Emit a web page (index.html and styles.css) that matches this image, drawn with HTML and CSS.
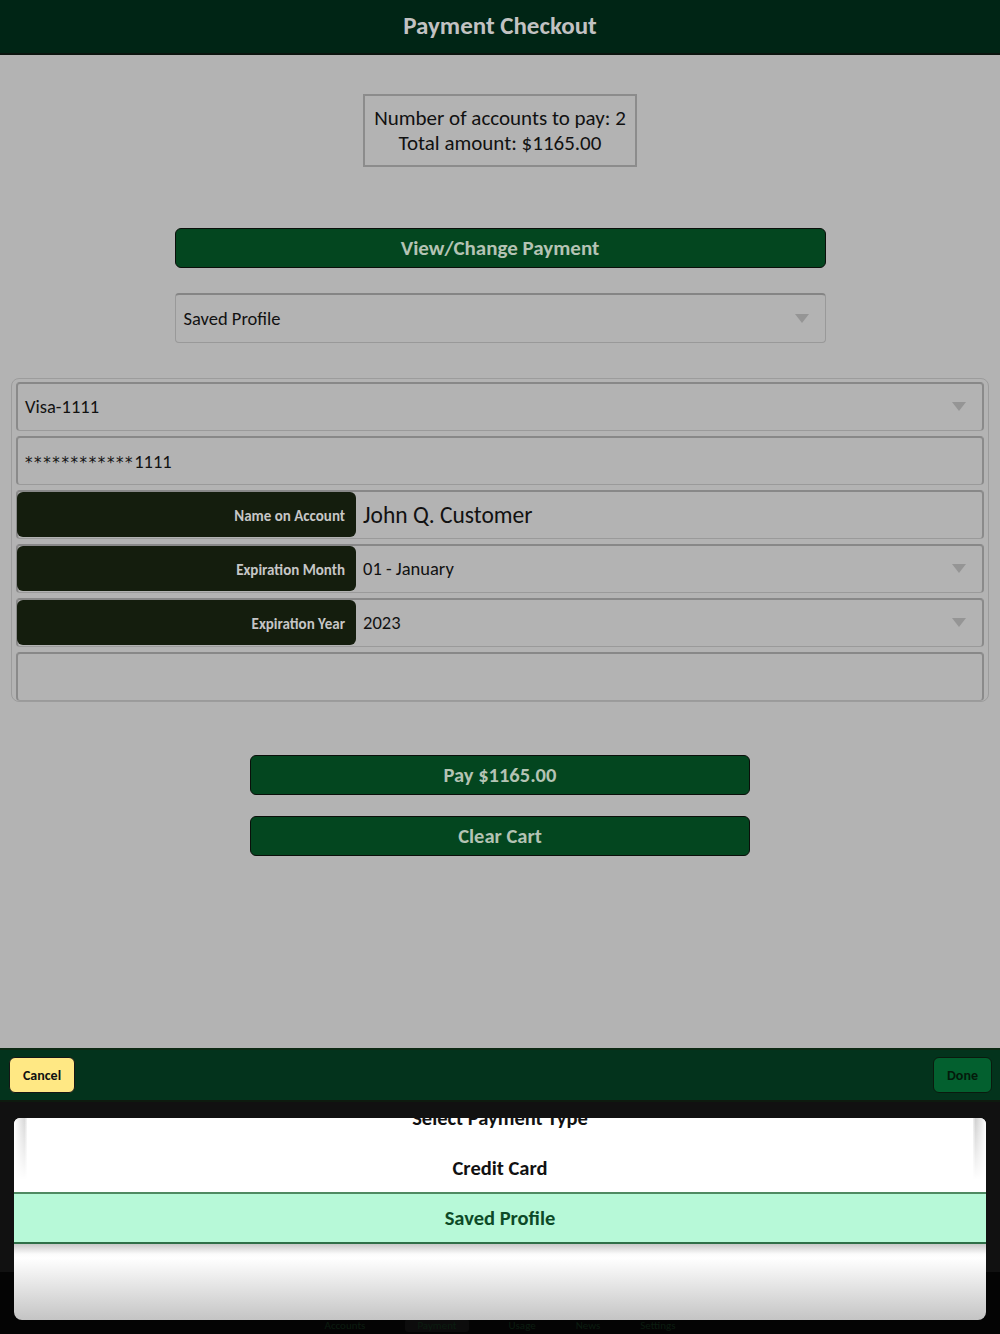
FILE: index.html
```html
<!DOCTYPE html>
<html lang="en">
<head>
  <meta charset="UTF-8" />
  <meta name="viewport" content="width=device-width, initial-scale=1.0"/>
  <title>Payment Checkout</title>
  <link rel="stylesheet" href="styles.css">
</head>
<body>
  <div class="screen">
    <header class="topbar">Payment Checkout</header>

    <main class="content">
      <div class="summary">
        <div>Number of accounts to pay: 2</div>
        <div>Total amount: $1165.00</div>
      </div>

      <button class="green-btn wide">View/Change Payment</button>

      <div class="select wide">
        <span>Saved Profile</span>
        <span class="caret"></span>
      </div>

      <div class="panel">
        <div class="row">
          <span class="value">Visa-1111</span>
          <span class="caret"></span>
        </div>
        <div class="row">
          <span class="value mask">************<span class="digits">1111</span></span>
        </div>
        <div class="row">
          <div class="label">Name on Account</div>
          <span class="value big">John Q. Customer</span>
        </div>
        <div class="row">
          <div class="label">Expiration Month</div>
          <span class="value">01 - January</span>
          <span class="caret"></span>
        </div>
        <div class="row">
          <div class="label">Expiration Year</div>
          <span class="value">2023</span>
          <span class="caret"></span>
        </div>
        <div class="row"></div>
      </div>

      <button class="green-btn pay">Pay $1165.00</button>
      <button class="green-btn pay second">Clear Cart</button>
    </main>

    <div class="toolbar">
      <button class="cancel">Cancel</button>
      <button class="done">Done</button>
    </div>

    <div class="picker-zone">
      <div class="tabs">
        <span>Accounts</span>
        <span class="on">Payment</span>
        <span>Usage</span>
        <span>News</span>
        <span>Settings</span>
      </div>
      <div class="picker">
        <div class="picker-top">
          <span class="shade left"></span>
          <div class="picker-title">Select Payment Type</div>
          <div class="picker-item">Credit Card</div>
          <span class="shade right"></span>
        </div>
        <div class="picker-item selected">Saved Profile</div>
        <div class="picker-bottom"></div>
      </div>
    </div>
  </div>
</body>
</html>
```

FILE: styles.css
```css
* {
  box-sizing: border-box;
}

body {
  margin: 0;
  font-family: Carlito, Lato, 'Open Sans', sans-serif;
  background: #000;
}

.screen {
  width: 1000px;
  height: 1334px;
  display: flex;
  flex-direction: column;
  overflow: hidden;
}

.topbar {
  height: 55px;
  background: #002515;
  border-bottom: 2px solid #0b140e;
  color: #c2c2c2;
  font-size: 25px;
  font-weight: bold;
  display: flex;
  align-items: center;
  justify-content: center;
  padding-bottom: 2px;
}

.content {
  height: 993px;
  background: #b3b3b3;
  display: flex;
  flex-direction: column;
  align-items: center;
  color: #111;
}

.summary {
  margin-top: 39px;
  width: 274px;
  height: 73px;
  border: 2px solid #8c8c8c;
  display: flex;
  flex-direction: column;
  justify-content: center;
  align-items: center;
  font-size: 21px;
  line-height: 25px;
}

.green-btn {
  display: block;
  background: #03461f;
  border: 1.5px solid #0a0f0a;
  border-radius: 6px;
  color: #b4c3b4;
  font-family: inherit;
  font-size: 20.5px;
  font-weight: bold;
  height: 40px;
  padding: 0;
}

.wide {
  width: 651px;
}

.green-btn.wide {
  margin-top: 61px;
  font-size: 21px;
}

.select {
  margin-top: 25px;
  height: 50px;
  border: 1px solid #999;
  border-top: 2px solid #858585;
  border-radius: 4px;
  display: flex;
  align-items: center;
  padding: 0 16px 0 8px;
  font-size: 18.5px;
}

.select span:first-child {
  flex: 1;
}

.caret {
  width: 0;
  height: 0;
  border-left: 7px solid transparent;
  border-right: 7px solid transparent;
  border-top: 9px solid #959595;
}

.panel {
  align-self: stretch;
  margin: 35px 11px 0;
  height: 324px;
  border: 1.5px solid #9c9c9c;
  border-radius: 8px;
  padding: 2.5px 4px 0 4px;
  display: flex;
  flex-direction: column;
  gap: 5px;
}

.row {
  height: 49px;
  flex-shrink: 0;
  border: 1px solid #9a9a9a;
  border-top: 2px solid #888;
  border-left: 2px solid #8a8a8a;
  border-right: 2px solid #8a8a8a;
  border-radius: 4px;
  display: flex;
  align-items: center;
  padding-right: 16px;
  font-size: 18.5px;
}

.row .value {
  flex: 1;
  padding-left: 7px;
}

.row .label + .value {
  padding-left: 7px;
}

.mask {
  font-family: 'DejaVu Sans', sans-serif;
  font-size: 15px;
  letter-spacing: 1.6px;
  padding-top: 2px;
}

.mask .digits {
  font-family: Carlito, Lato, sans-serif;
  font-size: 18.5px;
  letter-spacing: 0;
}

.value.big {
  font-size: 23.5px;
}

.label {
  align-self: stretch;
  width: 339px;
  margin: 0 0 1px -1px;
  background: #141d0d;
  border-radius: 6px;
  color: #c6c6c6;
  font-size: 15px;
  font-weight: bold;
  display: flex;
  align-items: center;
  justify-content: flex-end;
  padding: 4px 11px 0 0;
}

.pay {
  width: 500px;
  margin-top: 53px;
}

.pay.second {
  margin-top: 21px;
}

.toolbar {
  height: 54px;
  background: #03331c;
  border-top: 2px solid #0d2a14;
  border-bottom: 2px solid #0e1a0f;
  display: flex;
  justify-content: space-between;
  align-items: center;
  padding: 0 8px 0 9px;
}

.cancel,
.done {
  height: 36px;
  border-radius: 6px;
  font-family: inherit;
  font-weight: bold;
  font-size: 14px;
  padding: 0;
}

.cancel {
  width: 66px;
  background: #ffe884;
  border: 1.5px solid #161616;
  color: #111;
}

.done {
  width: 59px;
  background: #03602f;
  border: 1.5px solid #0a1a0e;
  color: #041a0b;
}

.picker-zone {
  position: relative;
  flex: 1;
  background: linear-gradient(#111 0, #111 170px, #040404 170px);
  padding: 16px 14px 0 14px;
}

.tabs {
  position: absolute;
  left: 0;
  right: 0;
  bottom: 2px;
  display: flex;
  justify-content: center;
  gap: 40px;
  font-size: 11px;
  color: #0b1d10;
}

.tabs .on {
  background: #0c0c0c;
  padding: 0 12px;
  border-radius: 3px;
}

.picker {
  position: relative;
  height: 202px;
  border-radius: 0 0 8px 8px;
  overflow: hidden;
  display: flex;
  flex-direction: column;
}

.picker-top {
  position: relative;
  height: 74px;
  background: #fff;
  border-radius: 6px 6px 0 0;
  overflow: hidden;
}

.shade {
  position: absolute;
  top: 0;
  width: 13px;
  height: 62px;
}

.shade.left {
  left: 0;
  background: linear-gradient(to right, #fff, #d8d8d8 80%, #f5f5f5);
  -webkit-mask-image: linear-gradient(#000, transparent);
  mask-image: linear-gradient(#000, transparent);
}

.shade.right {
  right: 0;
  background: linear-gradient(to left, #fff, #d0d0d0 80%, #f0f0f0);
  -webkit-mask-image: linear-gradient(#000, transparent);
  mask-image: linear-gradient(#000, transparent);
}

.picker-title {
  margin-top: -13px;
  text-align: center;
  font-size: 20.5px;
  font-weight: bold;
  color: #111;
  height: 24px;
}

.picker-item {
  text-align: center;
  font-size: 20.5px;
  font-weight: bold;
  color: #111;
  margin-top: 26px;
}

.picker-item.selected {
  margin-top: 0;
  height: 52px;
  line-height: 48px;
  background: #b7f9d8;
  color: #0c4a27;
  border-top: 2px solid #4f8a62;
  border-bottom: 2px solid #2f7048;
}

.picker-bottom {
  flex: 1;
  background: linear-gradient(#c8c8c8 0, #fbfbfb 10px, #fff 14px, #c4c4c4 100%);
}
```
